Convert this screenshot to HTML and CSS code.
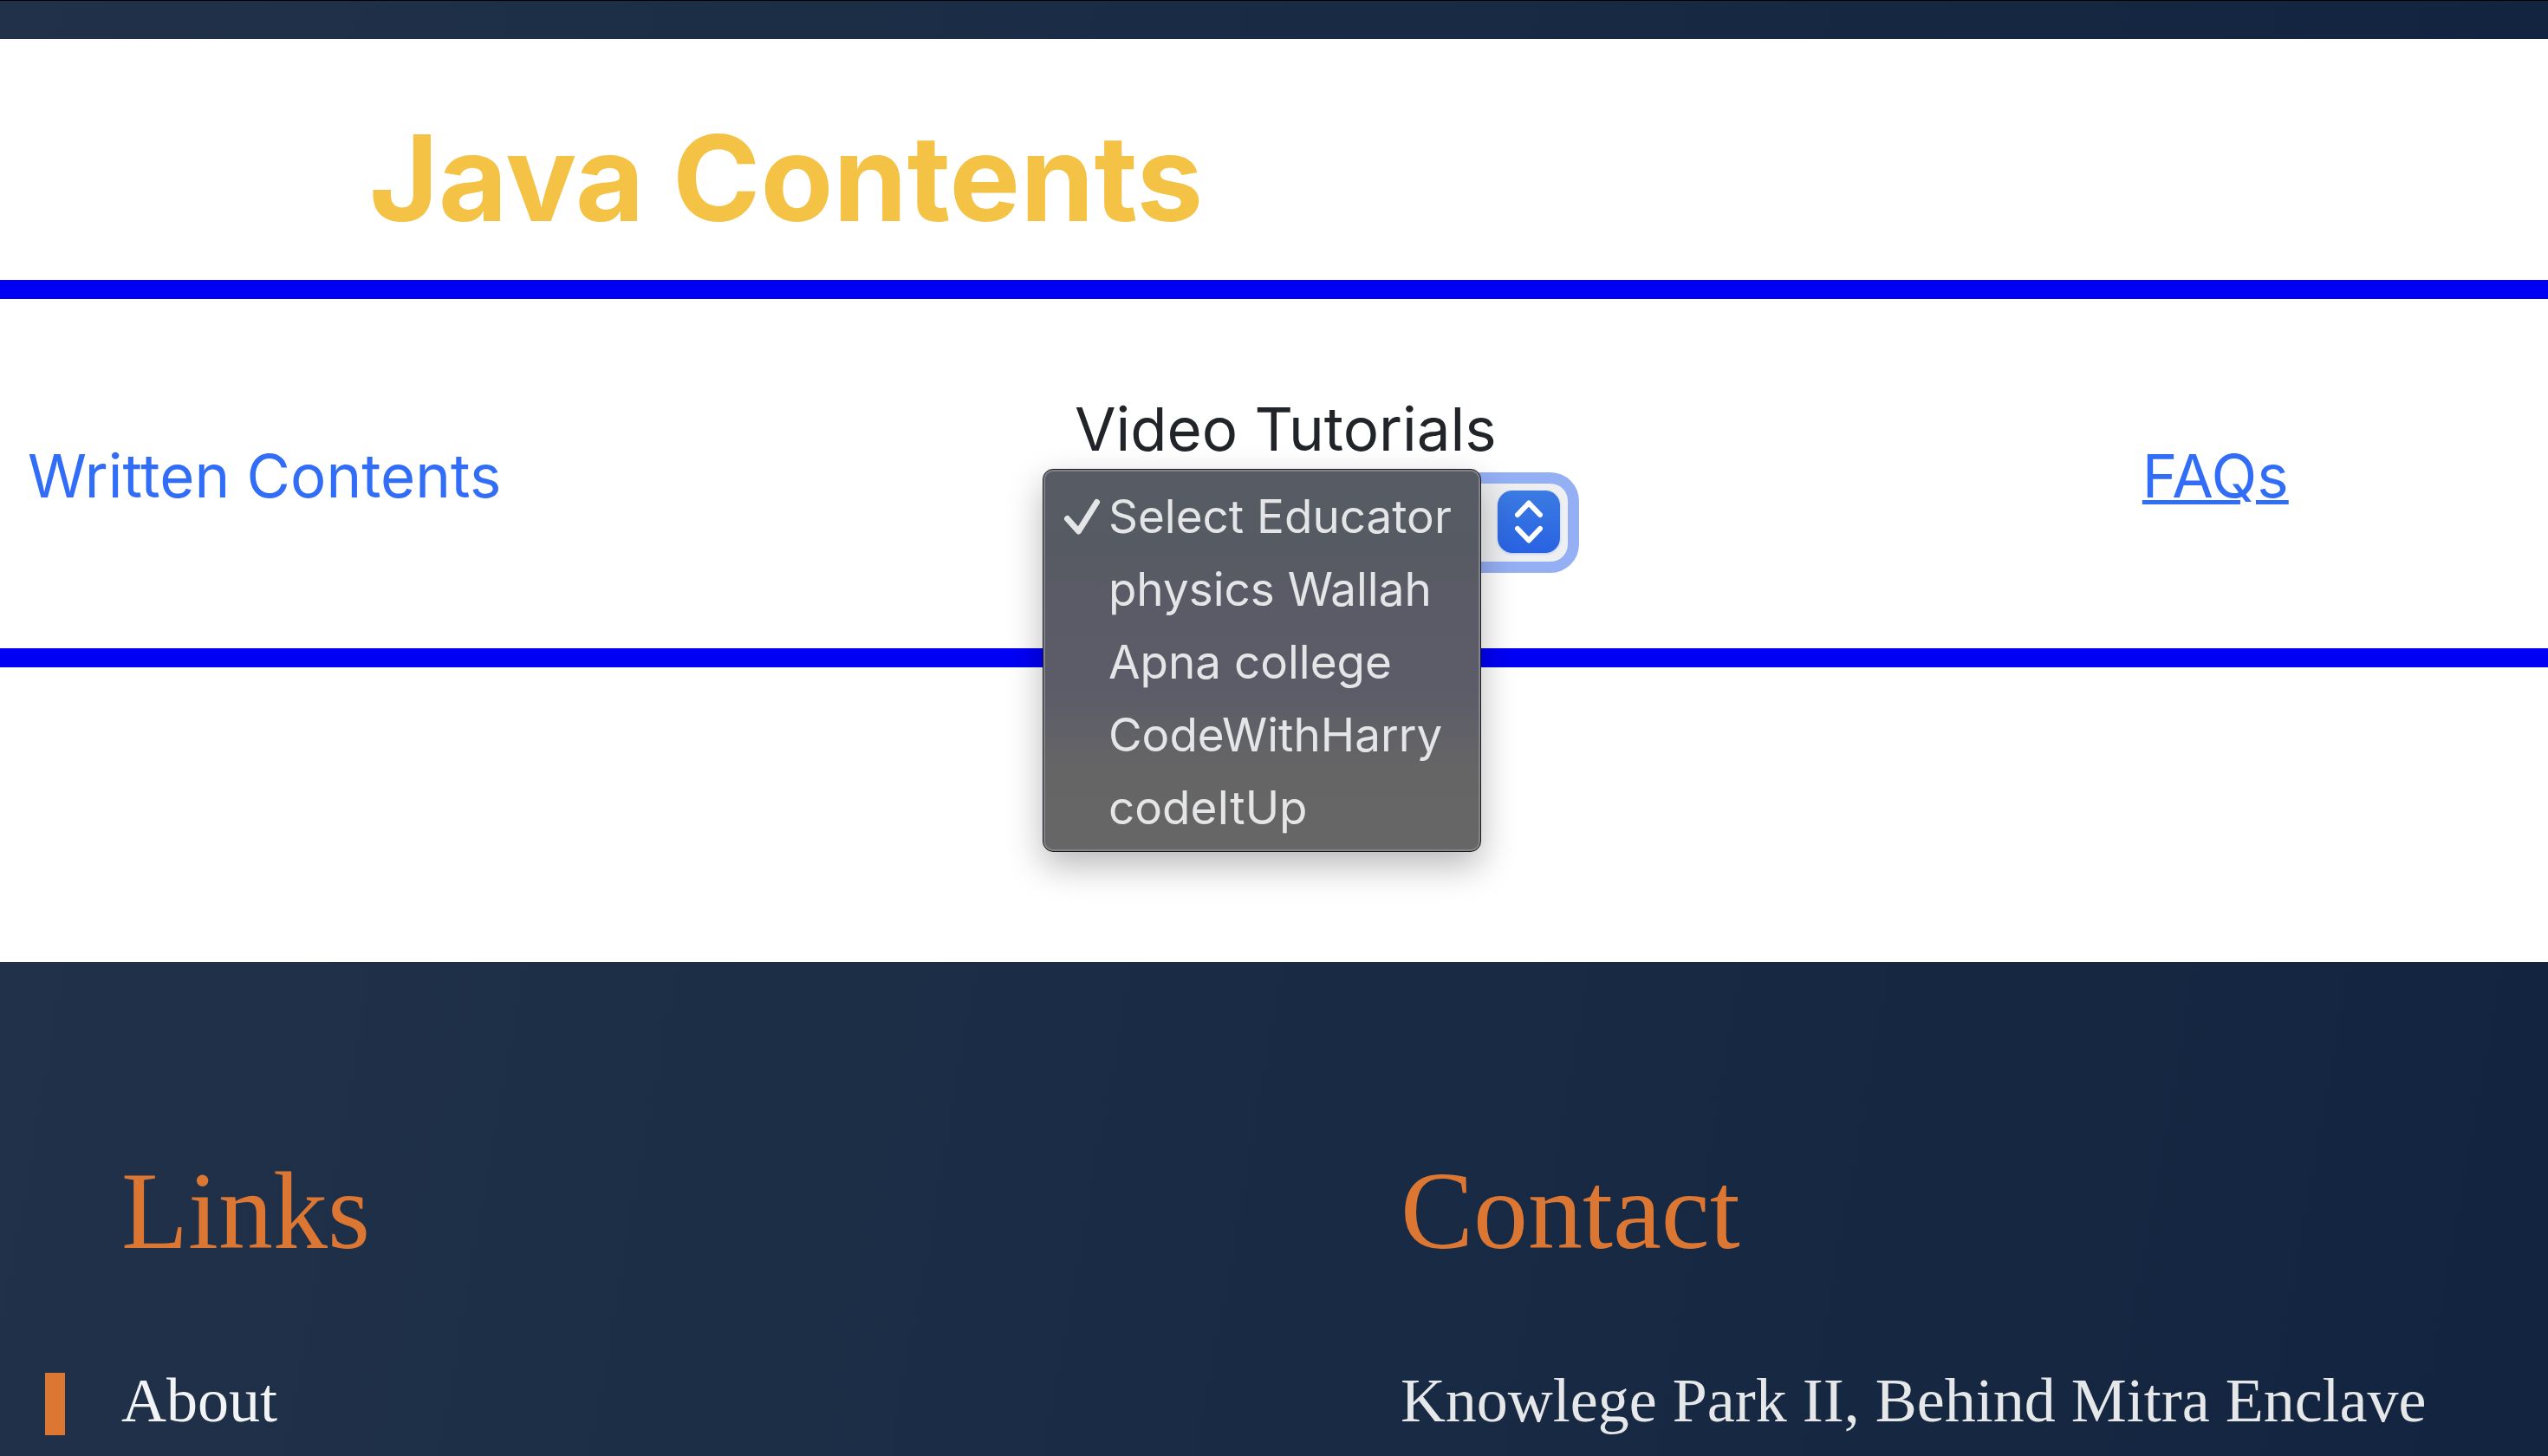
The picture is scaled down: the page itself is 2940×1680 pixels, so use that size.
FILE: index.html
```html
<!DOCTYPE html>
<html lang="en">
<head>
<meta charset="utf-8">
<meta name="viewport" content="width=device-width, initial-scale=1">
<title>Java Contents</title>
<link rel="stylesheet" href="styles.css">
</head>
<body>
<header class="topbar"></header>
<main class="content">
  <h1 class="title">Java Contents</h1>
  <section class="resources">
    <a class="link link-plain" href="#written">Written Contents</a>
    <div class="videos">
      <label class="videos-label" for="educator">Video Tutorials</label>
      <div class="picker">
        <select class="picker-select" id="educator">
          <option>Select Educator</option>
          <option>physics Wallah</option>
          <option>Apna college</option>
          <option>CodeWithHarry</option>
          <option>codeItUp</option>
        </select>
        <span class="picker-arrows" aria-hidden="true">
          <svg viewBox="0 0 72 72" fill="none" stroke="#fff" stroke-width="6" stroke-linecap="round" stroke-linejoin="round"><path d="M23 28 36 14.500 49 28M23 44 36 57.500 49 44"/></svg>
        </span>
        <div class="menu" role="listbox" aria-label="Educators">
          <button class="menu-item" type="button" role="option" aria-selected="true"><svg class="check" viewBox="0 0 44 44" fill="none" stroke="#e4e5e7" stroke-width="7" stroke-linecap="round" stroke-linejoin="round" aria-hidden="true"><path d="M4.500 24.500 17.500 39 38.500 5.500"/></svg>Select Educator</button>
          <button class="menu-item" type="button" role="option" aria-selected="false">physics Wallah</button>
          <button class="menu-item" type="button" role="option" aria-selected="false">Apna college</button>
          <button class="menu-item" type="button" role="option" aria-selected="false">CodeWithHarry</button>
          <button class="menu-item" type="button" role="option" aria-selected="false">codeItUp</button>
        </div>
      </div>
    </div>
    <a class="link" href="#faqs">FAQs</a>
  </section>
</main>
<footer class="footer">
  <section class="footer-column">
    <h2 class="footer-heading">Links</h2>
    <ul class="footer-links">
      <li class="footer-item"><a class="footer-link" href="#about">About</a></li>
    </ul>
  </section>
  <section class="footer-column">
    <h2 class="footer-heading">Contact</h2>
    <p class="address">Knowlege Park II, Behind Mitra Enclave</p>
  </section>
</footer>
</body>
</html>
```

FILE: styles.css
```css
* {
  box-sizing: border-box;
}

body {
  margin: 0;
  min-height: 100vh;
  display: flex;
  flex-direction: column;
  background: #fff;
  color: #212529;
  font: 69px/108px Inter, "Liberation Sans", sans-serif;
}

.topbar {
  height: 45px;
  border-top: 1px solid #000;
  background: linear-gradient(100deg, #203149, #132440);
}

.content {
  padding-bottom: 340px;
}

.title {
  margin: 0;
  padding: 76px 0 34px 426px;
  color: #f4c244;
  font-size: 137px;
  font-weight: 700;
  line-height: 168px;
}

.resources {
  display: grid;
  grid-template-columns: 41.4% 42.5% 1fr;
  align-items: center;
  padding: 96px 0 100px 32px;
  border: solid #0000f5;
  border-width: 22px 0;
}

.link {
  justify-self: start;
  padding-top: 8px;
  color: #316df6;
  text-decoration-thickness: 5px;
}

.link-plain {
  text-decoration: none;
}

.videos {
  justify-self: start;
}

.videos-label {
  display: block;
  padding: 0 0 9px 4px;
}

.picker {
  position: relative;
  width: 573px;
}

.picker-select {
  appearance: none;
  display: block;
  width: 100%;
  height: 90px;
  padding: 0 82px 0 44px;
  border: 0;
  border-radius: 20px;
  background: #eeeff0;
  color: #212529;
  font: 53px/84px Inter, "Liberation Sans", sans-serif;
  box-shadow: 0 0 0 13px #95aff5;
}

.picker-arrows {
  position: absolute;
  top: 8px;
  right: 9px;
  width: 72px;
  height: 72px;
  border-radius: 17px;
  background: linear-gradient(#3b7be3, #2962e2);
  box-shadow: 0 1px 3px #aac6f5;
  pointer-events: none;
}

.picker-arrows svg {
  display: block;
}

.menu {
  position: absolute;
  top: -17px;
  left: -33px;
  width: 506px;
  padding: 12px 2px 8px;
  border: 1px solid #1c1c1e;
  border-radius: 12px;
  background: linear-gradient(#575c64, #565a62 20%, #5b5b67 36%, #5b5c68 58%, #656566 78%, #666);
  box-shadow: inset 0 0 0 2px #808288, 0 16px 40px rgba(0, 0, 0, .28);
}

.menu-item {
  position: relative;
  display: block;
  width: 100%;
  height: 84px;
  padding: 0 0 0 73px;
  border: 0;
  background: none;
  color: #e4e5e7;
  font: 53px/84px Inter, "Liberation Sans", sans-serif;
  text-align: left;
  white-space: nowrap;
}

.check {
  position: absolute;
  top: 20px;
  left: 21px;
  width: 44px;
  height: 44px;
}

.footer {
  flex: 1;
  display: grid;
  grid-template-columns: 50.2% 1fr;
  padding-top: 216px;
  background: linear-gradient(100deg, #203149, #132440);
  font-family: "Liberation Serif", serif;
  font-size: 72px;
}

.footer-column {
  padding-left: 140px;
}

.footer-heading {
  margin: 0 0 92px;
  color: #dc7633;
  font-size: 126px;
  font-weight: 400;
  line-height: 144px;
}

.footer-links {
  margin: 0;
  padding: 0;
  list-style: none;
}

.footer-item {
  position: relative;
}

.footer-item::before {
  content: "";
  position: absolute;
  top: 22px;
  left: -88px;
  width: 23px;
  height: 72px;
  background: #dc7633;
}

.footer-link {
  color: #f2f3f4;
  text-decoration: none;
}

.address {
  margin: 0;
  color: #e5e7e9;
}
```
